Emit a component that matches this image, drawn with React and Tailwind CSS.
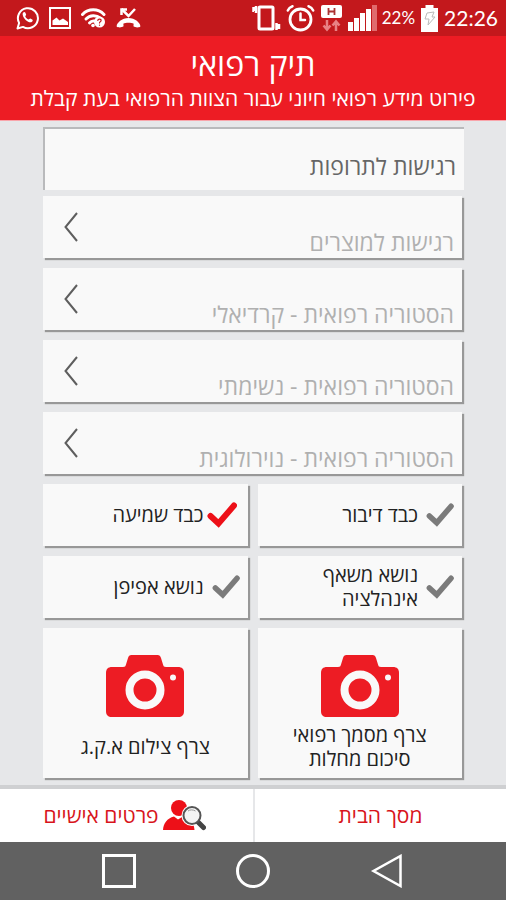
import React, { useState } from 'react';

const historyRows = [
  'רגישות למוצרים',
  'הסטוריה רפואית - קרדיאלי',
  'הסטוריה רפואית - נשימתי',
  'הסטוריה רפואית - נוירולוגית',
];

const conditions = [
  { id: 'speech', label: 'כבד דיבור' },
  { id: 'hearing', label: 'כבד שמיעה' },
  { id: 'inhaler', label: 'נושא משאף אינהלציה' },
  { id: 'epipen', label: 'נושא אפיפן' },
];

const card = 'bg-[#f9f9f9] shadow-[2px_2px_1px_#989898]';

function StatusBar() {
  return (
    <div dir="ltr" className="flex h-9 items-center justify-between bg-[#c3181c] pl-4 pr-2 text-white font-['Lato',sans-serif]">
      <div className="flex items-center gap-[10px]">
        {/* whatsapp */}
        <svg width="23" height="24" viewBox="0 0 23 24" fill="none" stroke="#fff" strokeWidth="2">
          <path d="M1.5 22.5l1.6-5.6A10 10 0 1 1 7 20.9z" strokeLinejoin="round" />
          <path d="M7.2 6.6c.9-.9 1.8-.7 2.2.2l.7 1.8c.2.6-.9 1.3-.8 1.8.6 1.4 1.8 2.5 3.2 3.1.6.1 1.2-1.2 1.8-1l1.9.9c.9.5.6 1.6-.2 2.3-1.4 1.2-4 .4-6.1-1.5-2.3-2-4.2-5.9-2.7-7.6z" fill="#fff" stroke="none" />
        </svg>
        {/* gallery */}
        <svg width="22" height="22" viewBox="0 0 22 22" fill="none">
          <rect x="1" y="1" width="20" height="20" stroke="#fff" strokeWidth="2" />
          <path d="M3.500 18v-4.500l4-3 3 3 3.500-2 5 3.500v3z" fill="#fff" />
        </svg>
        {/* wifi with a question mark */}
        <svg width="25" height="20" viewBox="0 0 25 20" fill="none" stroke="#fff" strokeWidth="3" strokeLinecap="round">
          <path d="M1.5 6.5C7.5.3 17 .3 23 6.5" />
          <path d="M5 11c4-4 10-4.300 14.500-.8" />
          <path d="M8.500 15c1.500-1.700 3.600-2.300 5.500-1.800" />
          <circle cx="12" cy="17.500" r="1.800" fill="#fff" stroke="none" />
          <circle cx="18.500" cy="14" r="5.500" fill="#fff" stroke="none" />
          <path d="M16.800 12.400c.3-2 3.600-1.700 3.300.2-.2 1-1.500 1.200-1.600 2.400M18.500 17v.2" stroke="#c3181c" strokeWidth="1.200" />
        </svg>
        {/* missed call */}
        <svg width="25" height="20" viewBox="0 0 25 20" fill="none">
          <path d="M5.500 1l7 7L19 1" stroke="#fff" strokeWidth="2.500" />
          <path d="M5.500 7V1.500H11" stroke="#fff" strokeWidth="2.500" />
          <path d="M.8 18.800c-1-3 4.700-8.800 11.700-8.800s12.700 5.800 11.700 8.800c-1 .8-5.200.8-6.500-.2-.6-1 .3-2.500-.3-3.200-1.700-1-8.100-1-9.800 0-.6.7.3 2.200-.3 3.200-1.300 1-5.500 1-6.500.2z" fill="#fff" />
        </svg>
      </div>
      <div className="flex items-center gap-[5px]">
        {/* vibrate */}
        <svg width="29" height="28" viewBox="0 0 29 28" fill="none" stroke="#fff">
          <rect x="7" y="3" width="14" height="22" rx="1" strokeWidth="3" />
          <path d="M1.500 3v5M4 2v7M24.500 19v7M27 20v5" strokeWidth="2.500" />
        </svg>
        {/* alarm */}
        <svg width="29" height="28" viewBox="0 0 29 28" fill="none" stroke="#fff" strokeWidth="2.800" strokeLinecap="round">
          <circle cx="14.500" cy="15.500" r="10.500" />
          <path d="M14.500 9.500V16H19M1.800 6.500c.8-2 2.500-3.600 4.700-4.300M27.200 6.500c-.8-2-2.500-3.600-4.700-4.300" strokeWidth="2.500" />
        </svg>
        {/* mobile data */}
        <svg width="23" height="27" viewBox="0 0 23 27">
          <rect x="1" y="0" width="21" height="13" rx="2" fill="#fff" />
          <path d="M8.500 3v7M14.500 3v7M8 6.500h7" stroke="#a33" strokeWidth="1.800" />
          <path d="M7 15v9M3.500 20.500L7 24.500l3.500-4M16 26v-9M12.500 20.500l3.500-4 3.500 4" fill="none" stroke="#e98184" strokeWidth="2.500" />
        </svg>
        {/* signal */}
        <svg width="29" height="28" viewBox="0 0 29 28" fill="#fff">
          <rect x="0" y="18" width="5" height="9" />
          <rect x="6" y="14" width="5" height="13" />
          <rect x="12" y="9" width="5" height="18" />
          <rect x="18" y="5" width="5" height="22" />
          <rect x="24" y="1" width="5" height="26" fill="#e06a6d" />
        </svg>
        <span className="text-[17px] leading-9">22%</span>
        {/* battery */}
        <svg width="19" height="27" viewBox="0 0 19 27">
          <path d="M5.500 0h8v3H18v24H1V3h4.500z" fill="#fff" />
          <path d="M7 8l7-1-2 5h3l-7 8 1-6H5z" fill="none" stroke="#bbb" strokeWidth="1" />
        </svg>
        <span className="text-[21px] leading-9">22:26</span>
      </div>
    </div>
  );
}

function Chevron() {
  return (
    <svg className="self-center" width="14" height="30" viewBox="0 0 14 30" fill="none" stroke="#5e5e5e" strokeWidth="2">
      <path d="M13 1L1.500 15 13 29" />
    </svg>
  );
}

function Check({ checked }) {
  return (
    <svg
      width={checked ? 30 : 28}
      height={checked ? 26 : 24}
      viewBox="0 0 30 26"
      fill="none"
      stroke={checked ? '#ed1018' : '#7b7b7b'}
      strokeWidth="6"
      strokeLinecap="round"
    >
      <path d="M3.500 14l8 7.500L27 3.500" />
    </svg>
  );
}

function Condition({ id, label, checked, onChange }) {
  return (
    <label htmlFor={id} className={`${card} flex h-[62px] cursor-pointer items-center pr-2`}>
      <input id={id} type="checkbox" checked={checked} onChange={onChange} className="sr-only" />
      <span className={checked ? 'flex w-9 shrink-0 justify-center' : 'flex w-9 shrink-0 justify-start'}>
        <Check checked={checked} />
      </span>
      <span className="max-w-32 text-[20px] leading-6 text-[#222]">{label}</span>
    </label>
  );
}

function Camera() {
  return (
    <svg width="78" height="62" viewBox="0 0 78 62">
      <path
        d="M6 12h11c2 0 2.600-.8 3-2.500l2-6.500c.6-2 1.500-3 3.500-3h26c2 0 2.900 1 3.500 3l2 6.500c.4 1.700 1 2.500 3 2.500h12c4 0 6 2 6 6v38c0 4-2 6-6 6H6c-4 0-6-2-6-6V18c0-4 2-6 6-6z"
        fill="#ed1c24"
      />
      <circle cx="39" cy="35" r="15.500" fill="none" stroke="#f9f9f9" strokeWidth="8" />
      <circle cx="67" cy="22.500" r="3" fill="#f9f9f9" />
    </svg>
  );
}

function PhotoButton({ label }) {
  return (
    <button type="button" className={`${card} flex h-[150px] flex-col items-center pt-[27px]`}>
      <Camera />
      <span className="mt-[6px] flex h-12 max-w-40 items-center text-[20px] leading-6 text-[#222]">{label}</span>
    </button>
  );
}

function PersonSearch() {
  return (
    <svg width="43" height="31" viewBox="0 0 43 31">
      <circle cx="16" cy="8" r="8" fill="#ed1018" />
      <path d="M0 30c.5-7 4-11.500 11-13.500l4 3 5-3c7 1.500 11 6 11.500 13.500z" fill="#ed1018" />
      <circle cx="29" cy="15.500" r="10.500" fill="#fff" />
      <path d="M35 22l5.500 5.500" stroke="#444" strokeWidth="5" strokeLinecap="round" />
      <circle cx="29" cy="15.500" r="8.500" fill="#f4f4f4" stroke="#555" strokeWidth="2" />
      <path d="M25 11c2-1.500 5-1.500 7.500 0" stroke="#999" strokeWidth="1" fill="none" />
    </svg>
  );
}

export default function App() {
  const [selected, setSelected] = useState({ hearing: true });

  const toggle = (id) => setSelected((prev) => ({ ...prev, [id]: !prev[id] }));

  return (
    <div dir="rtl" className="flex min-h-screen flex-col bg-[#e6e7e9] font-['Open_Sans','Noto_Sans',sans-serif]">
      <StatusBar />

      <header className="h-[85px] border-b border-[#f9a5ab] bg-[#ed1c24] text-center text-white">
        <h1 className="pt-2 text-[32px] leading-10">תיק רפואי</h1>
        <p className="text-[21px] leading-7">פירוט מידע רפואי חיוני עבור הצוות הרפואי בעת קבלת</p>
      </header>

      <main className="flex-1 pl-[43px] pr-[42px] pt-[6px]">
        <input
          type="text"
          aria-label="רגישות לתרופות"
          placeholder="רגישות לתרופות"
          className="mb-[6px] block h-[63px] w-full border-l-2 border-t-2 border-[#b9babc] bg-[#f9f9f9] pr-2 pt-3 text-[23px] text-[#666] outline-none placeholder:text-[#666]"
        />

        <div className="mr-[2px] flex flex-col gap-[10px]">
          {historyRows.map((row) => (
            <button key={row} type="button" className={`${card} flex h-[62px] items-end justify-between pl-[21px] pr-2`}>
              <span className="text-[23px] leading-8 text-[#b0b0b0]">{row}</span>
              <Chevron />
            </button>
          ))}
        </div>

        <div className="mr-[2px] mt-[10px] grid grid-cols-2 gap-[10px]">
          {conditions.map((c) => (
            <Condition key={c.id} id={c.id} label={c.label} checked={!!selected[c.id]} onChange={() => toggle(c.id)} />
          ))}
          <PhotoButton label="צרף מסמך רפואי סיכום מחלות" />
          <PhotoButton label="צרף צילום א.ק.ג" />
        </div>
      </main>

      <footer className="mt-[5px] grid grid-cols-2 border-t-4 border-[#cfd0d2] bg-white text-[21px] text-[#d8141b]">
        <a href="#home" className="flex h-[53px] items-center justify-center border-l-2 border-[#e6e7e9]">
          מסך הבית
        </a>
        <a href="#personal" className="flex h-[53px] items-center justify-center gap-1 pr-1">
          <PersonSearch />
          <span>פרטים אישיים</span>
        </a>
      </footer>

      <nav dir="ltr" className="flex h-[58px] items-center justify-center gap-[100px] bg-[#616161]">
        <button type="button" aria-label="Recent apps">
          <svg width="34" height="34" viewBox="0 0 34 34" fill="none" stroke="#fff" strokeWidth="3">
            <rect x="1.500" y="1.500" width="31" height="31" />
          </svg>
        </button>
        <button type="button" aria-label="Home">
          <svg width="34" height="34" viewBox="0 0 34 34" fill="none" stroke="#fff" strokeWidth="3">
            <circle cx="17" cy="17" r="15.500" />
          </svg>
        </button>
        <button type="button" aria-label="Back">
          <svg width="34" height="34" viewBox="0 0 34 34" fill="none" stroke="#fff" strokeWidth="2.500">
            <path d="M30.500 2v30L3.500 17z" />
          </svg>
        </button>
      </nav>
    </div>
  );
}
